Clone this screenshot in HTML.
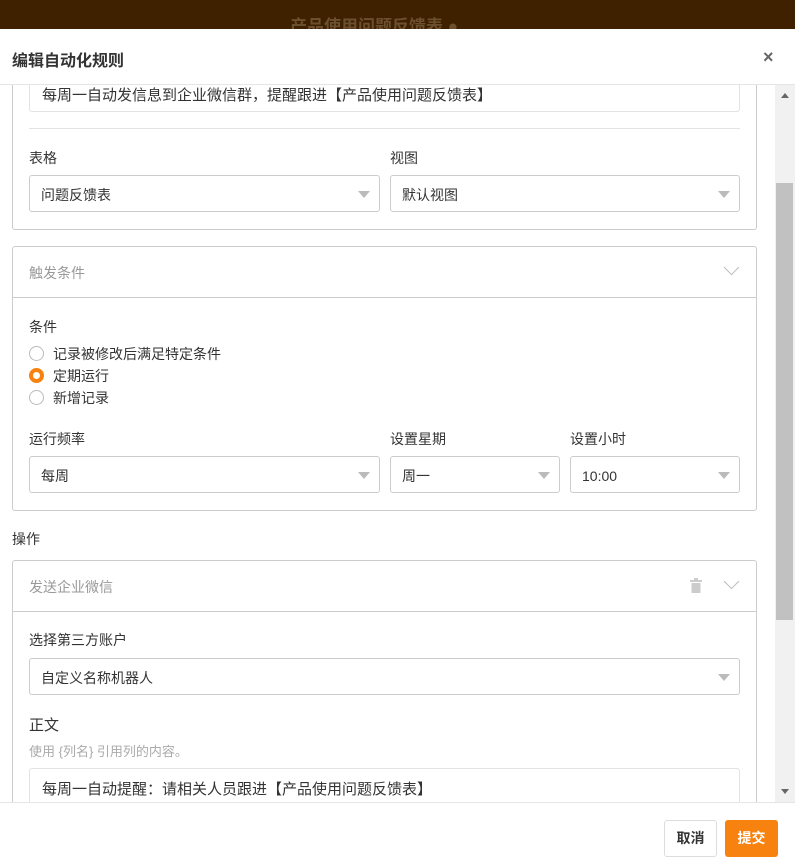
<!DOCTYPE html>
<html><head><meta charset="utf-8"><style>
*{box-sizing:border-box;margin:0;padding:0}
body{width:795px;height:860px;overflow:hidden;position:relative;background:#fff;font-family:"Liberation Sans","Noto Sans CJK SC",sans-serif;font-size:14px;color:#333}
.a{position:absolute}
.box{position:absolute;border:1px solid #ddd;border-radius:3px;background:#fff}
.sel{position:absolute;border:1px solid #ccc;border-radius:3px;height:37px;line-height:39px;padding-left:11px;color:#333;background:#fff}
.sel:after{content:"";position:absolute;right:9px;top:15px;border-left:6px solid transparent;border-right:6px solid transparent;border-top:7px solid #bbb}
.lbl{position:absolute;font-size:14px;color:#333}
.card{position:absolute;left:12px;width:745px;border:1px solid #ccc;border-radius:3px;background:#fff}
.chev{position:absolute;width:11px;height:11px;border-right:1.5px solid #bbb;border-bottom:1.5px solid #bbb;transform:rotate(45deg)}
.radio{position:absolute;left:29px;width:15px;height:15px;border:1px solid #bbb;border-radius:50%}
</style></head><body>
<div class="a" style="left:0;top:0;width:795px;height:29px;background:#3f2100"></div>
<div class="a" style="left:290px;top:12px;font-size:17px;color:#6b5030;font-weight:bold">产品使用问题反馈表 ●</div>

<div class="card" style="top:60px;height:170px;border-top:none"></div>
<div class="box" style="left:29px;top:76px;width:711px;height:36px;border-color:#e3e3e3"></div>
<div class="a" style="left:42px;top:84px;font-size:15px">每周一自动发信息到企业微信群，提醒跟进【产品使用问题反馈表】</div>
<div class="a" style="left:29px;top:128px;width:711px;height:1px;background:#e3e3e3"></div>
<div class="lbl" style="left:29px;top:148px">表格</div>
<div class="lbl" style="left:390px;top:148px">视图</div>
<div class="sel" style="left:29px;top:175px;width:351px">问题反馈表</div>
<div class="sel" style="left:390px;top:175px;width:350px">默认视图</div>

<div class="card" style="top:246px;height:265px"></div>
<div class="a" style="left:12px;top:297px;width:745px;height:1px;background:#ccc"></div>
<div class="a" style="left:29px;top:263px;color:#999">触发条件</div>
<div class="chev" style="left:726px;top:262px"></div>
<div class="lbl" style="left:29px;top:317px">条件</div>
<div class="radio" style="top:346px"></div>
<div class="radio" style="top:368px;border:4px solid #f7820f"></div>
<div class="radio" style="top:390px"></div>
<div class="lbl" style="left:53px;top:344px">记录被修改后满足特定条件</div>
<div class="lbl" style="left:53px;top:366px">定期运行</div>
<div class="lbl" style="left:53px;top:388px">新增记录</div>
<div class="lbl" style="left:29px;top:429px">运行频率</div>
<div class="lbl" style="left:390px;top:429px">设置星期</div>
<div class="lbl" style="left:570px;top:429px">设置小时</div>
<div class="sel" style="left:29px;top:456px;width:351px">每周</div>
<div class="sel" style="left:390px;top:456px;width:170px">周一</div>
<div class="sel" style="left:570px;top:456px;width:170px">10:00</div>

<div class="lbl" style="left:12px;top:529px">操作</div>
<div class="card" style="top:560px;height:260px"></div>
<div class="a" style="left:12px;top:611px;width:745px;height:1px;background:#ccc"></div>
<div class="a" style="left:29px;top:577px;color:#999">发送企业微信</div>
<svg class="a" style="left:689px;top:578px" width="14" height="15" viewBox="0 0 14 15"><rect x="1" y="2" width="12" height="2" fill="#ccc"/><rect x="5" y="0" width="4" height="2" fill="#ccc"/><rect x="2.5" y="5" width="9" height="10" fill="#ccc"/></svg>
<div class="chev" style="left:726px;top:576px"></div>
<div class="lbl" style="left:29px;top:630px">选择第三方账户</div>
<div class="sel" style="left:29px;top:658px;width:711px">自定义名称机器人</div>
<div class="lbl" style="left:29px;top:714px;font-size:15px">正文</div>
<div class="a" style="left:29px;top:741px;color:#aaa;font-size:13px">使用 {列名} 引用列的内容。</div>
<div class="box" style="left:29px;top:768px;width:711px;height:60px;border-color:#e3e3e3"></div>
<div class="a" style="left:42px;top:778px;font-size:15px">每周一自动提醒：请相关人员跟进【产品使用问题反馈表】</div>

<div class="a" style="left:775px;top:85px;width:20px;height:717px;background:#f1f1f1"></div>
<div class="a" style="left:776px;top:183px;width:17px;height:437px;background:#c1c1c1"></div>
<div class="a" style="left:781px;top:93px;border-left:4px solid transparent;border-right:4px solid transparent;border-bottom:5px solid #666"></div>
<div class="a" style="left:781px;top:789px;border-left:4px solid transparent;border-right:4px solid transparent;border-top:5px solid #666"></div>

<div class="a" style="left:0;top:29px;width:795px;height:56px;background:#fff;border-bottom:1px solid #e5e5e5"></div>
<div class="a" style="left:12px;top:47px;font-size:16px;font-weight:bold;color:#333">编辑自动化规则</div>
<div class="a" style="left:763px;top:47px;font-size:18px;color:#666;font-weight:bold">×</div>

<div class="a" style="left:0;top:802px;width:795px;height:58px;background:#fff;border-top:1px solid #e5e5e5"></div>
<div class="a" style="left:664px;top:820px;width:53px;height:37px;border:1px solid #ddd;border-radius:3px;text-align:center;line-height:35px;font-weight:bold">取消</div>
<div class="a" style="left:725px;top:820px;width:53px;height:37px;background:#f7820f;border-radius:3px;text-align:center;line-height:37px;color:#fff;font-weight:bold">提交</div>
</body></html>
